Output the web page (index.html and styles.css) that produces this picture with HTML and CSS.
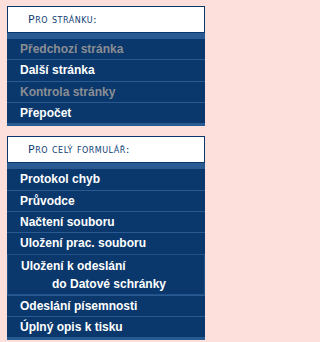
FILE: index.html
```html
<!DOCTYPE html>
<html lang="cs">
<head>
<meta charset="utf-8">
<link rel="stylesheet" href="styles.css">
</head>
<body>
<div class="panel">
  <div class="head">Pro stránku:</div>
  <ul class="menu">
    <li class="item disabled">Předchozí stránka</li>
    <li class="item">Další stránka</li>
    <li class="item disabled">Kontrola stránky</li>
    <li class="item">Přepočet</li>
  </ul>
</div>
<div class="panel">
  <div class="head">Pro celý formulář:</div>
  <ul class="menu">
    <li class="item">Protokol chyb</li>
    <li class="item">Průvodce</li>
    <li class="item">Načtení souboru</li>
    <li class="item">Uložení prac. souboru</li>
    <li class="item boxed"><span class="line">Uložení k odeslání</span><span class="line indent">do Datové schránky</span></li>
    <li class="item">Odeslání písemnosti</li>
    <li class="item">Úplný opis k tisku</li>
  </ul>
</div>
</body>
</html>
```
FILE: styles.css
```css
html, body {
  margin: 0;
  padding: 0;
  background: #fde0dc;
}
body {
  padding: 6px 0 0 7px;
  display: flex;
  flex-direction: column;
  gap: 10px;
}
.panel {
  width: 198px;
  background: #0a386c;
  border-bottom: 3px solid #2a5a92;
}
.head {
  box-sizing: border-box;
  height: 27px;
  background: #ffffff;
  border: 1px solid #0a386c;
  padding-left: 20px;
  display: flex;
  align-items: center;
  font-family: "DejaVu Sans", Verdana, sans-serif;
  font-size: 11px;
  font-variant: small-caps;
  letter-spacing: 0.5px;
  color: #0f3d73;
}
.menu {
  list-style: none;
  margin: 0;
  padding: 0;
  border-top: 6px solid #2a5a92;
}
.item {
  height: 20.33px;
  line-height: 20px;
  padding-left: 13px;
  font-family: "Liberation Sans", Arial, sans-serif;
  font-weight: bold;
  font-size: 12px;
  color: #ffffff;
  white-space: nowrap;
}
.item + .item {
  border-top: 1px solid #2a5a92;
}
.item.disabled {
  color: #8a8d93;
}
.item.boxed {
  height: auto;
  line-height: 18px;
  padding: 2px 0 1px 13px;
  border: 1px solid #23528a;
}
.line {
  display: block;
}
.line.indent {
  padding-left: 31px;
}
```
